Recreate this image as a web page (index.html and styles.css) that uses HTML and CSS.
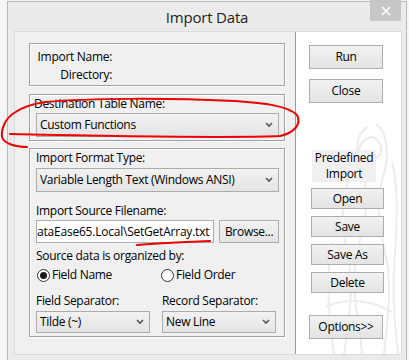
FILE: index.html
```html
<!DOCTYPE html>
<html lang="en">
<head>
  <meta charset="UTF-8" />
  <title>Import Data</title>
  <link rel="stylesheet" href="styles.css">
</head>
<body>

  <div class="window">
    <div class="titlebar">
      <span></span>
      <span class="title">Import Data</span>
      <span class="close-btn">
        <svg width="10" height="10" viewBox="0 0 10 10"><path d="M1 1 L9 9 M9 1 L1 9" stroke="#fff" stroke-width="1.6" /></svg>
      </span>
    </div>

    <div class="client">
      <div class="left-pane">

        <div class="group info">
          <span class="info-label">Import Name:</span>
          <span class="info-label">Directory:</span>
        </div>

        <div class="group dest">
          <div class="field-label">Destination Table Name:</div>
          <div class="combo">
            <span>Custom Functions</span>
            <svg class="chev" width="8" height="6" viewBox="0 0 8 6"><path d="M1 1 L4 4 L7 1" fill="none" stroke="#555" stroke-width="1.6" /></svg>
          </div>
        </div>

        <div class="group format">
          <div class="field-label">Import Format Type:</div>
          <div class="combo">
            <span>Variable Length Text (Windows ANSI)</span>
            <svg class="chev" width="8" height="6" viewBox="0 0 8 6"><path d="M1 1 L4 4 L7 1" fill="none" stroke="#555" stroke-width="1.6" /></svg>
          </div>

          <div class="field-label gap-lg">Import Source Filename:</div>
          <div class="file-row">
            <div class="path"><span>C:\Users\Public\DataEase65.Local\SetGetArray.txt</span></div>
            <div class="btn browse">Browse...</div>
          </div>

          <div class="field-label gap-sm">Source data is organized by:</div>
          <div class="radio-row">
            <label class="radio"><span class="dot checked"></span>Field Name</label>
            <label class="radio"><span class="dot"></span>Field Order</label>
          </div>

          <div class="sep-row">
            <div>
              <div class="field-label">Field Separator:</div>
              <div class="combo small">
                <span>Tilde (~)</span>
                <svg class="chev" width="8" height="6" viewBox="0 0 8 6"><path d="M1 1 L4 4 L7 1" fill="none" stroke="#555" stroke-width="1.6" /></svg>
              </div>
            </div>
            <div>
              <div class="field-label">Record Separator:</div>
              <div class="combo small">
                <span>New Line</span>
                <svg class="chev" width="8" height="6" viewBox="0 0 8 6"><path d="M1 1 L4 4 L7 1" fill="none" stroke="#555" stroke-width="1.6" /></svg>
              </div>
            </div>
          </div>
        </div>

      </div>

      <div class="right-pane">
        <!-- faint logo watermark behind the buttons -->
        <svg class="watermark" width="105" height="322" viewBox="0 0 105 322">
          <g fill="none" stroke="#ececec" stroke-width="2">
            <path d="M72 95 C60 100 58 120 66 140 C74 160 70 190 62 215 C56 240 58 270 64 300 L66 322" />
            <path d="M80 92 C92 100 94 125 86 148 C80 170 84 200 90 225 C96 250 92 285 88 322" />
            <path d="M52 150 C44 170 46 200 52 225 C58 250 54 285 48 322" />
            <path d="M96 130 C104 160 100 200 98 240 C96 270 100 300 102 322" />
            <path d="M36 210 C30 240 32 280 38 322" />
            <path d="M62 120 C66 105 78 100 84 112 C88 122 80 130 74 124" />
            <path d="M40 190 C50 200 70 200 84 190" />
            <path d="M30 275 C50 265 75 268 96 280" />
          </g>
        </svg>
        <div class="btn side">Run</div>
        <div class="btn side close">Close</div>
        <div class="predef">Predefined<br>Import</div>
        <div class="btn side small open">Open</div>
        <div class="btn side small">Save</div>
        <div class="btn side small">Save As</div>
        <div class="btn side small">Delete</div>
        <div class="btn side options">Options&gt;&gt;</div>
      </div>
    </div>
  </div>

  <!-- red hand-drawn annotation on top of the screenshot -->
  <svg class="annot" width="409" height="360" viewBox="0 0 409 360">
    <g fill="none" stroke="#ee0000" stroke-width="2" stroke-linecap="round">
      <path d="M27 147 C14 147 4 143 2 137 C1 128 6 118 14 113 C22 107 32 104 45 102 C90 98 170 98 235 101 C265 103 288 106 297 115 C302 124 294 133 280 136 C230 138 150 137 10 134" />
      <path d="M137 245 C160 243 185 242 210 241" />
    </g>
  </svg>

</body>
</html>
```

FILE: styles.css
```css
* {
  box-sizing: border-box;
}

body {
  margin: 0;
  height: 360px;
  overflow: hidden;
  position: relative;
  background: #f6f6f6;
  font-family: "Open Sans", "Noto Sans", sans-serif;
  font-size: 12px;
  letter-spacing: -0.3px;
  line-height: 16px;
  color: #000;
}

.window {
  margin: 1px 0 0 7px;
  width: 400px;
  height: 359px;
  background: #ebebeb;
  border: 1px solid #b9b9b9;
  border-bottom: none;
}

.titlebar {
  height: 29px;
  display: grid;
  grid-template-columns: 1fr auto 1fr;
  align-items: center;
}

.title {
  font-size: 15px;
  letter-spacing: -0.2px;
  color: #222;
  padding-top: 1px;
}

.close-btn {
  justify-self: end;
  align-self: start;
  margin: -2px 5px 0 0;
  width: 31px;
  height: 21px;
  background: #c7c7c7;
  display: flex;
  align-items: center;
  justify-content: center;
}

.client {
  display: flex;
  margin: 0 4px 0 6px;
  height: 324px;
  border: 1px solid #dadada;
}

.left-pane {
  width: 281px;
  background: #f0f0f0;
  border-right: 1px solid #9a9a9a;
  padding: 11px 10px 0 14px;
}

.group {
  width: 256px;
  border: 1px solid #a0a0a0;
  box-shadow: inset 1px 1px 0 #fff, 1px 1px 0 #fff;
}

.info {
  height: 43px;
  padding: 5px 0 0 6px;
  display: grid;
  grid-template-columns: 76px;
  justify-items: end;
}

.info-label {
  white-space: nowrap;
}

.dest {
  margin-top: 8px;
  height: 47px;
  padding: 1px 5px 0 4px;
}

.dest .combo {
  margin: 1px 0 0 2px;
}

.format {
  margin-top: 7px;
  height: 189px;
  padding: 1px 5px 0 6px;
}

.field-label {
  height: 16px;
  white-space: nowrap;
}

.format .field-label + .combo {
  margin-top: 2px;
}

.gap-lg {
  margin-top: 11px;
}

.gap-sm {
  margin-top: 5px;
}

.combo {
  height: 24px;
  border: 1px solid #acacac;
  background: linear-gradient(#f2f2f2, #e4e4e4);
  display: flex;
  align-items: center;
  justify-content: space-between;
  padding: 0 5px 0 3px;
  white-space: nowrap;
}

.combo.small {
  height: 22px;
  width: 114px;
}

.chev {
  flex-shrink: 0;
}

.file-row {
  display: flex;
  gap: 5px;
  margin-top: 1px;
}

.path {
  width: 179px;
  height: 23px;
  border: 1px solid #abadb3;
  background: #fff;
  display: flex;
  align-items: center;
  justify-content: flex-end;
  overflow: hidden;
  white-space: nowrap;
  padding-right: 4px;
}

.path span {
  flex-shrink: 0;
  letter-spacing: -0.22px;
}

.btn {
  border: 1px solid #acacac;
  background: linear-gradient(#f2f2f2, #e4e4e4);
  display: flex;
  align-items: center;
  justify-content: center;
  white-space: nowrap;
}

.browse {
  width: 60px;
  height: 23px;
}

.radio-row {
  display: grid;
  grid-template-columns: 124px auto;
  margin-top: 3px;
}

.radio {
  display: flex;
  align-items: center;
  gap: 2px;
  padding-left: 1px;
}

.dot {
  width: 13px;
  height: 13px;
  border: 1px solid #333;
  border-radius: 50%;
  background: #fff;
  display: flex;
  align-items: center;
  justify-content: center;
}

.dot.checked::after {
  content: "";
  width: 7px;
  height: 7px;
  border-radius: 50%;
  background: #1a1a1a;
}

.sep-row {
  display: grid;
  grid-template-columns: 114px 114px;
  column-gap: 12px;
  margin-top: 10px;
}

.sep-row .combo {
  margin-top: 2px;
}

.right-pane {
  position: relative;
  flex: 1;
  background: #fff;
  display: flex;
  flex-direction: column;
  align-items: flex-start;
  padding: 13px 0 0 13px;
}

.watermark {
  position: absolute;
  left: 0;
  top: 0;
}

.side {
  position: relative;
  width: 74px;
  height: 24px;
}

.close {
  margin-top: 10px;
}

.side.small {
  width: 73px;
  height: 21px;
  margin: 7px 0 0 2px;
}

.side.open {
  margin-top: 6px;
}

.predef {
  position: relative;
  margin: 47px 0 0 3px;
  width: 64px;
  background: #f0f0f0;
  text-align: center;
}

.options {
  margin-top: 22px;
}

.annot {
  position: absolute;
  left: 0;
  top: 0;
  pointer-events: none;
}
```
